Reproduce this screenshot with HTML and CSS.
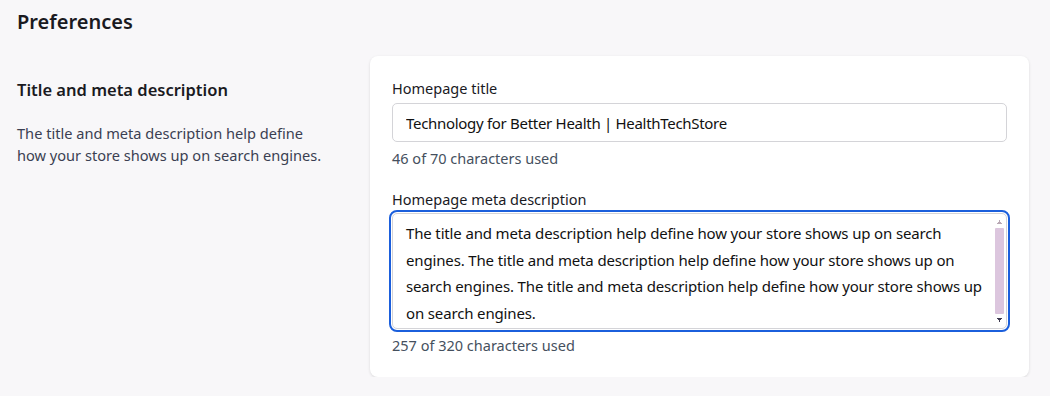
FILE: index.html
```html
<!DOCTYPE html>
<html>
  <head>
    <meta charset="utf-8" />
    <meta name="viewport" content="width=device-width,initial-scale=1.0" />
    <title>Preferences</title>
    <link rel="stylesheet" href="styles.css">
  </head>

  <body>
    <h1 class="page-title">Preferences</h1>

    <section class="settings-row">
      <!-- section intro -->
      <div class="intro">
        <h2>Title and meta description</h2>
        <p>
          The title and meta description help define<br />
          how your store shows up on search engines.
        </p>
      </div>

      <!-- form card -->
      <div class="card">
        <label class="field">
          <span class="field-label">Homepage title</span>
          <input class="text-input" type="text" value="Technology for Better Health | HealthTechStore" />
          <span class="field-help">46 of 70 characters used</span>
        </label>

        <label class="field">
          <span class="field-label">Homepage meta description</span>
          <div class="textarea-wrap">
            <textarea class="text-area is-focused">The title and meta description help define how your store shows up on search engines. The title and meta description help define how your store shows up on search engines. The title and meta description help define how your store shows up on search engines.</textarea>
            <!-- scrollbar drawn by hand, the headless browser hides native ones -->
            <div class="fake-scroll">
              <span class="arrow up"></span>
              <span class="thumb"></span>
              <span class="arrow down"></span>
            </div>
          </div>
          <span class="field-help help-after-area">257 of 320 characters used</span>
        </label>
      </div>
    </section>
  </body>
</html>
```

FILE: styles.css
```css
body {
  margin: 0;
  padding: 0 21px 0 17px;
  background: #f8f7f9;
  color: #1a1a1f;
  font-family: "Noto Sans", "Open Sans", sans-serif;
  font-size: 14px;
}
.page-title {
  margin: 0;
  padding-top: 8px;
  font-size: 20px;
  line-height: 28px;
  font-weight: 600;
}

/* two column row */
.settings-row {
  display: flex;
  margin-top: 20px;
}
.intro {
  width: 353px;
  flex: none;
  padding-top: 22px;
}
.intro h2 {
  margin: 0;
  font-size: 16.5px;
  line-height: 24px;
  font-weight: 600;
}
.intro p {
  margin: 20px 0 0;
  font-size: 14.6px;
  line-height: 22px;
  color: #3b3f52;
}

/* card */
.card {
  flex: 1;
  background: #fff;
  border-radius: 8px;
  box-shadow: 0 1px 3px rgba(0, 0, 0, 0.12);
  padding: 21px 22px 21px;
}
.field {
  display: flex;
  flex-direction: column;
}
.field + .field {
  margin-top: 19px;
}
.field-label {
  font-size: 14.5px;
  line-height: 22px;
  margin-bottom: 4px;
}
.field-help {
  font-size: 14.5px;
  line-height: 22px;
  margin-top: 5px;
  color: #45505e;
}
.text-input {
  height: 39px;
  box-sizing: border-box;
  border: 1px solid #d4d4d8;
  border-radius: 5px;
  padding: 0 13px;
  font: inherit;
  font-size: 15px;
  letter-spacing: -0.3px;
  color: #111;
}

/* textarea with focus ring */
.textarea-wrap {
  position: relative;
  display: flex;
  margin-top: -1px;
}
.text-area {
  flex: 1;
  height: 116px;
  box-sizing: border-box;
  border: 1px solid #d4d4d8;
  border-radius: 5px;
  padding: 6px 20px 8px 13px;
  font: inherit;
  font-size: 15px;
  letter-spacing: -0.15px;
  line-height: 26.7px;
  color: #111;
  resize: none;
  overflow-y: hidden;
}
.text-area.is-focused {
  outline: 2px solid #1b5fdc;
  outline-offset: 1px;
}
.fake-scroll {
  position: absolute;
  top: 4px;
  bottom: 4px;
  right: 2px;
  width: 12px;
  display: flex;
  flex-direction: column;
  align-items: center;
  pointer-events: none;
}
.fake-scroll .thumb {
  flex: 1;
  width: 9px;
  margin: 1px 0;
  background: #dcc6de;
  border-radius: 1px;
}
.fake-scroll .arrow {
  height: 10px;
  width: 12px;
  background-repeat: no-repeat;
  background-position: center;
  background-size: 7px 4px;
}
.fake-scroll .arrow.up {
  background-image: conic-gradient(from 150deg at 50% 0, #b9a8b4 60deg, transparent 0);
}
.fake-scroll .arrow.down {
  background-image: conic-gradient(from -30deg at 50% 100%, #3d3a50 60deg, transparent 0);
}
```
